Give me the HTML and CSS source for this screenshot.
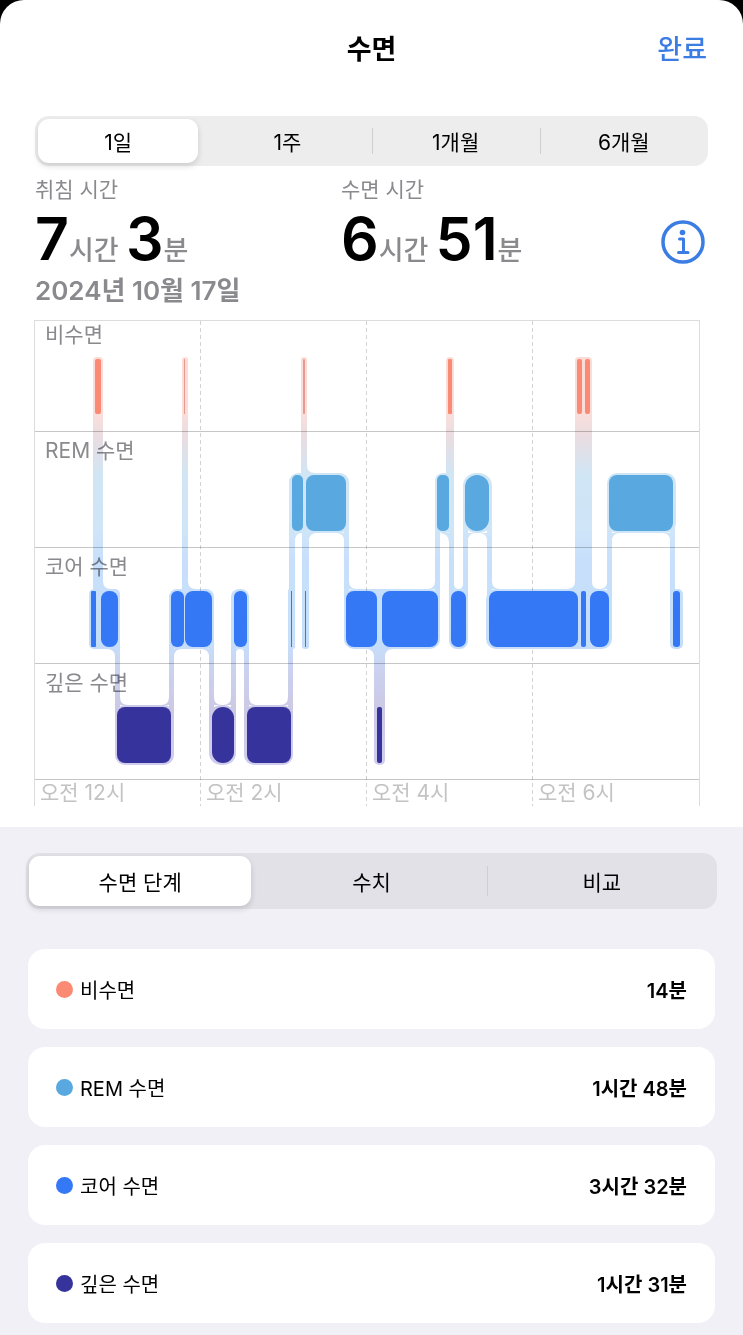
FILE: index.html
```html
<!DOCTYPE html>
<html lang="ko">
<head>
<meta charset="UTF-8" />
<meta name="viewport" content="width=device-width,initial-scale=1" />
<title>수면</title>
<link rel="stylesheet" href="styles.css">
</head>
<body>
<div class="sheet">
  <header class="header">
    <h1>수면</h1>
    <button type="button" class="btn-done">완료</button>
  </header>

  <main>
    <section class="overview">
      <!-- 기간 선택 -->
      <div class="segments period" role="group" aria-label="기간">
        <button type="button" aria-pressed="true">1일</button>
        <button type="button" aria-pressed="false">1주</button>
        <button type="button" aria-pressed="false">1개월</button>
        <button type="button" aria-pressed="false">6개월</button>
      </div>

      <div class="summary">
        <div class="total">
          <h2>취침 시간</h2>
          <p><b>7</b>시간 <b>3</b>분</p>
        </div>
        <div class="total">
          <h2>수면 시간</h2>
          <p><b>6</b>시간 <b>51</b>분</p>
        </div>
        <button type="button" class="btn-info" aria-label="정보">
          <svg viewBox="0 0 44 44" fill="none" stroke="currentColor" aria-hidden="true">
            <circle cx="22" cy="22" r="20" stroke-width="3.5" />
            <circle cx="21.5" cy="12.5" r="2.8" fill="currentColor" stroke="none" />
            <path d="M18.5 19h4v13M17.5 32.5h9.5" stroke-width="3" stroke-linecap="round" stroke-linejoin="round" />
          </svg>
        </button>
      </div>
      <p class="date">2024년 10월 17일</p>

      <!-- 수면 단계 차트 -->
      <div class="chart">
        <div class="stage">비수면</div>
        <div class="stage">REM 수면</div>
        <div class="stage">코어 수면</div>
        <div class="stage">깊은 수면</div>
        <div class="hours">
          <span>오전 12시</span>
          <span>오전 2시</span>
          <span>오전 4시</span>
          <span>오전 6시</span>
        </div>
        <svg class="plot" viewBox="0 0 666 486" preserveAspectRatio="none" aria-hidden="true">
          <defs>
            <linearGradient id="trail" gradientUnits="userSpaceOnUse" x1="0" y1="37" x2="0" y2="445">
              <stop offset="0" stop-color="#fcdcd7" />
              <stop offset="0.14" stop-color="#fadedb" />
              <stop offset="0.2" stop-color="#e8dde2" />
              <stop offset="0.29" stop-color="#d0e6f5" />
              <stop offset="0.42" stop-color="#cfe5f8" />
              <stop offset="0.5" stop-color="#c7dffb" />
              <stop offset="0.7" stop-color="#c5dffb" />
              <stop offset="0.77" stop-color="#cbd1ee" />
              <stop offset="0.86" stop-color="#cbc9e6" />
              <stop offset="1" stop-color="#cfccee" />
            </linearGradient>
          </defs>
          <path class="grid" d="M166.5 1V486M332.5 1V486M498.5 1V486" />

          <g class="trail" fill="url(#trail)">
            <!-- 블록 테두리 -->
            <rect x="59" y="37" width="10" height="70" rx="4" />
            <rect x="148" y="37" width="6" height="70" rx="3" />
            <rect x="267" y="37" width="6" height="70" rx="3" />
            <rect x="412" y="37" width="8" height="70" rx="4" />
            <rect x="541" y="37" width="17" height="70" rx="4" />
            <rect x="255" y="153" width="60" height="60" rx="9" />
            <rect x="401" y="153" width="19" height="60" rx="8" />
            <rect x="429" y="153" width="29" height="60" rx="13" />
            <rect x="573" y="153" width="69" height="60" rx="10" />
            <rect x="55" y="269" width="31" height="60" rx="5" />
            <rect x="69" y="269" width="17" height="60" rx="8" />
            <rect x="135" y="269" width="45" height="60" rx="8" />
            <rect x="197" y="269" width="18" height="60" rx="8" />
            <rect x="254" y="269" width="7" height="60" rx="2" />
            <rect x="268" y="269" width="7" height="60" rx="3" />
            <rect x="310" y="269" width="96" height="60" rx="10" />
            <rect x="415" y="269" width="19" height="60" rx="8" />
            <rect x="452" y="269" width="126" height="60" rx="10" />
            <rect x="636" y="269" width="13" height="60" rx="5" />
            <rect x="81" y="385" width="59" height="60" rx="10" />
            <rect x="175" y="385" width="27" height="60" rx="12" />
            <rect x="210" y="385" width="49" height="60" rx="10" />
            <rect x="340" y="385" width="11" height="60" rx="5" />
            <!-- 단계 사이 연결선 -->
            <path d="M59 60h10v240h-10zM148 60h6v240h-6zM267 60h6v120h-6zM412 60h8v120h-8zM541 60h17v240h-17z" />
            <path d="M81 300h5v115h-5zM135 300h5v115h-5zM175 300h5v115h-5zM197 300h5v115h-5zM210 300h5v115h-5zM254 300h5v115h-5zM340 300h11v115h-11z" />
            <path d="M255 180h6v120h-6zM268 180h7v120h-7zM310 180h5v120h-5zM401 180h5v120h-5zM415 180h5v120h-5zM429 180h5v120h-5zM453 180h5v120h-5zM573 180h5v120h-5zM636 180h5v120h-5z" />
            <!-- 위쪽 모서리 -->
            <path d="M69 261q0 8 8 8h-8zM154 261q0 8 8 8h-8zM273 145q0 8 8 8h-8zM315 261q0 8 8 8h-8zM420 264q0 5 5 5h-5zM458 261q0 8 8 8h-8zM558 262q0 7 7 7h-7zM86 377q0 8 8 8h-8zM180 377q0 8 8 8h-8zM215 377q0 8 8 8h-8z" />
            <path d="M401 261q0 8-8 8h8zM429 264q0 5-5 5h5zM541 261q0 8-8 8h8zM573 262q0 7-7 7h7zM135 377q0 8-8 8h8zM197 377q0 8-8 8h8zM254 377q0 8-8 8h8z" />
            <!-- 아래쪽 모서리 -->
            <path d="M140 337q0-8 8-8h-8zM202 333q0-4 4-4h-4zM351 337q0-8 8-8h-8zM261 221q0-8 7-8h-7zM275 221q0-8 8-8h-8zM434 221q0-8 8-8h-8zM578 221q0-8 8-8h-8z" />
            <path d="M81 337q0-8-8-8h8zM175 337q0-8-8-8h8zM210 333q0-4-4-4h4zM340 337q0-8-8-8h8zM310 221q0-8-8-8h8zM415 222q0-8-9-9h9zM453 221q0-8-8-8h8zM636 221q0-8-8-8h8z" />
          </g>

          <g class="awake">
            <rect x="61" y="39" width="6" height="55" rx="2" />
            <rect class="thin" x="150" y="39" width="1" height="55" />
            <rect class="thin" x="269" y="39" width="2" height="55" rx="1" />
            <rect x="414" y="39" width="4" height="55" rx="1" />
            <rect x="543" y="39" width="5" height="55" rx="2" />
            <rect x="551" y="39" width="5" height="55" rx="2" />
          </g>
          <g class="rem">
            <rect x="258" y="155" width="11" height="56" rx="5" />
            <rect x="272" y="155" width="40" height="56" rx="8" />
            <rect x="403" y="155" width="12" height="56" rx="5" />
            <rect x="431" y="155" width="24" height="56" rx="12" />
            <rect x="575" y="155" width="64" height="56" rx="8" />
          </g>
          <g class="core">
            <rect x="57" y="271" width="5" height="56" rx="1" />
            <rect x="67" y="271" width="17" height="56" rx="8" />
            <rect x="137" y="271" width="13" height="56" rx="6" />
            <rect x="151" y="271" width="27" height="56" rx="8" />
            <rect x="200" y="271" width="13" height="56" rx="6" />
            <rect x="257" y="271" width="1" height="56" />
            <rect x="271" y="271" width="1" height="56" />
            <rect x="312" y="271" width="31" height="56" rx="8" />
            <rect x="348" y="271" width="56" height="56" rx="8" />
            <rect x="417" y="271" width="15" height="56" rx="7" />
            <rect x="455" y="271" width="89" height="56" rx="8" />
            <rect x="547" y="271" width="5" height="56" rx="2" />
            <rect x="556" y="271" width="19" height="56" rx="8" />
            <rect x="639" y="271" width="7" height="56" rx="3" />
          </g>
          <g class="deep">
            <rect x="83" y="387" width="54" height="56" rx="8" />
            <rect x="178" y="387" width="22" height="56" rx="11" />
            <rect x="213" y="387" width="44" height="56" rx="8" />
            <rect x="343" y="387" width="5" height="56" rx="2" />
          </g>
        </svg>
      </div>
    </section>

    <section class="details">
      <div class="segments views" role="group" aria-label="보기">
        <button type="button" aria-pressed="true">수면 단계</button>
        <button type="button" aria-pressed="false">수치</button>
        <button type="button" aria-pressed="false">비교</button>
      </div>

      <ul class="stages">
        <li><span class="dot dot-awake"></span>비수면<strong>14분</strong></li>
        <li><span class="dot dot-rem"></span>REM 수면<strong>1시간 48분</strong></li>
        <li><span class="dot dot-core"></span>코어 수면<strong>3시간 32분</strong></li>
        <li><span class="dot dot-deep"></span>깊은 수면<strong>1시간 31분</strong></li>
      </ul>
    </section>
  </main>
</div>
</body>
</html>
```

FILE: styles.css
```css
/* ---------- Theme Colors ---------- */
:root {
  --tint: #3b7de3;
  --gray: #8a8a8e;
  --light-gray: #c3c3c5;
  --line: #c6c6c6;
  --awake: #fb8a74;
  --rem: #59a9e0;
  --core: #3478f6;
  --deep: #36349c;
}

/* ---------- Reset & Base ---------- */
* { box-sizing: border-box; }
body {
  margin: 0;
  background: #000;
  color: #000;
  font-family: Inter, "Noto Sans CJK KR", sans-serif;
  font-size: 20px;
}
h1, h2, p, ul { margin: 0; padding: 0; }
button {
  padding: 0;
  border: 0;
  background: none;
  color: inherit;
  font: inherit;
  cursor: pointer;
}
.sheet {
  background: #fff;
  border-radius: 24px 24px 0 0;
  overflow: hidden;
}

/* ---------- Header ---------- */
.header {
  display: grid;
  grid-template-columns: 1fr auto 1fr;
  align-items: center;
  height: 94px;
  padding: 0 36px;
}
.header h1 {
  grid-column: 2;
  font-size: 27px;
  font-weight: 600;
}
.btn-done {
  justify-self: end;
  color: var(--tint);
  font-size: 27px;
  font-weight: 500;
}

/* ---------- Segmented control ---------- */
.segments {
  display: grid;
  grid-auto-flow: column;
  grid-auto-columns: 1fr;
  padding: 3px 0;
  background: #ededed;
  border-radius: 14px;
  font-size: 21px;
}
.segments button {
  position: relative;
  border-radius: 11px;
}
.segments button[aria-pressed="true"] {
  margin: 0 5px 0 3px;
  background: #fff;
  box-shadow: 0 3px 6px rgba(0, 0, 0, 0.14);
}
.segments button[aria-pressed="false"] + button::before {
  content: "";
  position: absolute;
  left: 0;
  top: 20%;
  bottom: 20%;
  width: 1px;
  background: #cfcfd3;
}
.period { height: 50px; }

/* ---------- Overview ---------- */
.overview { padding: 22px 35px 21px; }
.summary {
  display: grid;
  grid-template-columns: 5fr 5fr 1fr;
  align-items: end;
  margin-top: 9px;
}
.total h2 {
  color: var(--gray);
  font-size: 21px;
  font-weight: 400;
  line-height: 30px;
}
.total p {
  padding-top: 9px;
  color: var(--gray);
  font-size: 27px;
  font-weight: 500;
  line-height: 50px;
  white-space: nowrap;
}
.total b {
  color: #000;
  font-size: 59px;
  font-weight: 600;
}
.btn-info {
  justify-self: end;
  width: 44px;
  height: 44px;
  margin: 0 3px 12px 0;
  color: var(--tint);
}
.btn-info svg { display: block; }
.date {
  color: var(--gray);
  font-size: 26px;
  font-weight: 600;
  line-height: 30px;
}

/* ---------- Chart ---------- */
.chart {
  position: relative;
  margin: 14px 8px 0 -1px;
  border: solid #dcdcdc;
  border-width: 1px 1px 0;
  color: var(--gray);
}
.stage {
  height: 116px;
  padding: 5px 10px;
  border-bottom: 1px solid var(--line);
  font-size: 21px;
  line-height: 28px;
}
.stage:first-child {
  height: 111px;
  padding-top: 0;
}
.hours {
  display: grid;
  grid-template-columns: repeat(4, 1fr);
  height: 26px;
  color: var(--light-gray);
  font-size: 21px;
  line-height: 26px;
}
.hours span { padding-left: 5px; }
.plot {
  position: absolute;
  left: -1px;
  top: -1px;
  width: calc(100% + 2px);
  height: calc(100% + 1px);
  mix-blend-mode: multiply;
}
.grid {
  fill: none;
  stroke: #d2d2d2;
  stroke-dasharray: 4 3;
}
.trail { mix-blend-mode: multiply; }
.awake { fill: var(--awake); }
.awake .thin { fill: #e79a8d; }
.rem { fill: var(--rem); }
.core { fill: var(--core); }
.deep { fill: var(--deep); }

/* ---------- Details ---------- */
.details {
  padding: 26px 28px 14px;
  background: #f1f0f6;
}
.views {
  height: 56px;
  margin: 0 -2px 40px;
  background: #e2e1e8;
}
.stages {
  display: grid;
  gap: 18px;
  list-style: none;
}
.stages li {
  display: flex;
  align-items: center;
  height: 80px;
  padding: 0 28px;
  background: #fff;
  border-radius: 17px;
}
.stages strong {
  margin-left: auto;
  font-weight: 600;
}
.dot {
  width: 17px;
  height: 17px;
  margin-right: 7px;
  border-radius: 50%;
}
.dot-awake { background: var(--awake); }
.dot-rem { background: var(--rem); }
.dot-core { background: var(--core); }
.dot-deep { background: var(--deep); }
```
